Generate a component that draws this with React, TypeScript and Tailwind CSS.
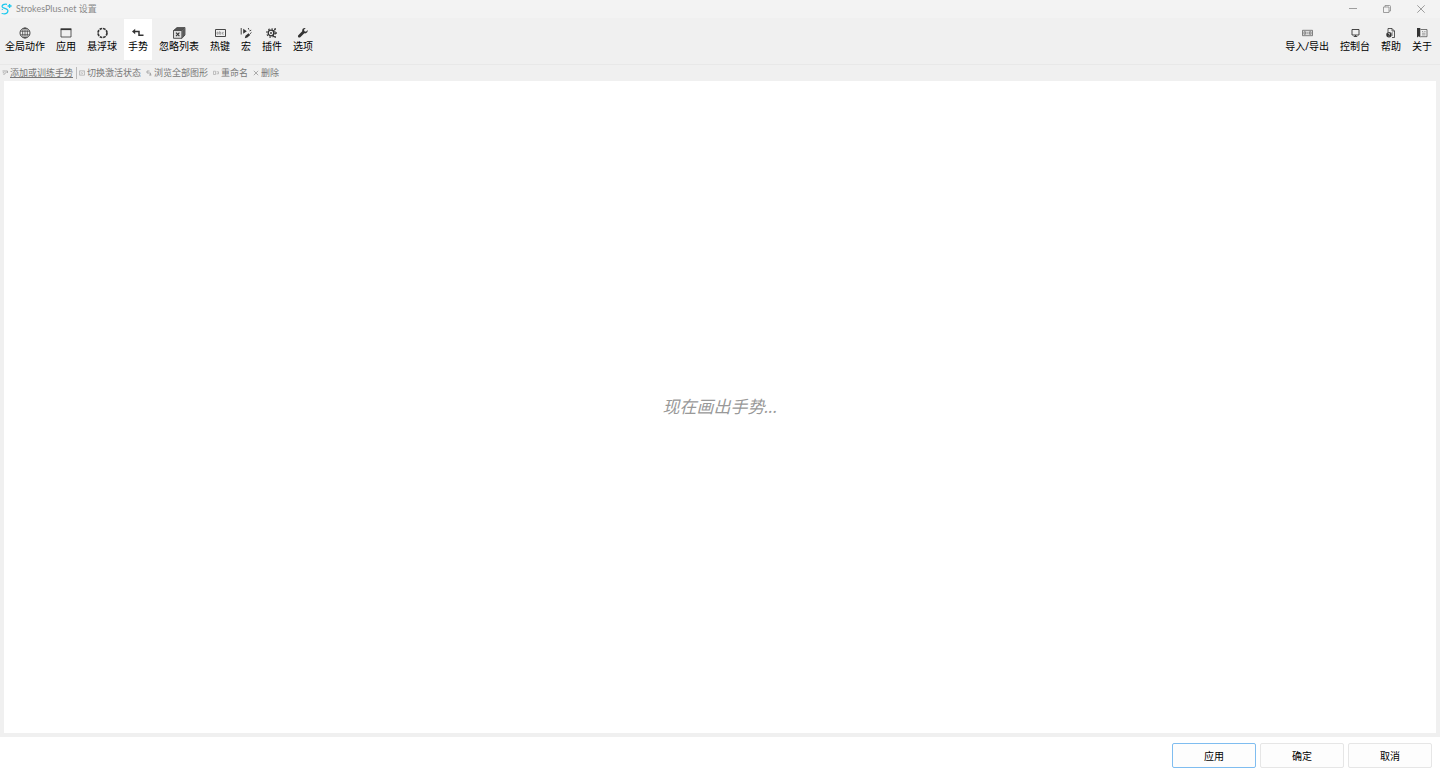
import type { ReactNode } from "react";

type Item = { label: string; icon: ReactNode; active?: boolean };

function Icon({ children }: { children: ReactNode }) {
  return (
    <svg viewBox="0 0 14 14" className="-mx-[2px] h-[14px] w-[14px] shrink-0" fill="none" stroke="#333" strokeWidth="0.9" aria-hidden="true">
      {children}
    </svg>
  );
}

function SmallIcon({ children }: { children: ReactNode }) {
  return (
    <svg viewBox="0 0 6 6" className="h-[6px] w-[6px] shrink-0" fill="none" stroke="#999" strokeWidth="0.8" aria-hidden="true">
      {children}
    </svg>
  );
}

const tabs: Item[] = [
  {
    label: "全局动作",
    icon: (
      <Icon>
        <circle cx="7" cy="7" r="5" />
        <ellipse cx="7" cy="7" rx="2.4" ry="5" strokeWidth="0.7" />
        <path d="M7 2v10M2.6 5.2h8.8M2.6 8.8h8.8" strokeWidth="0.7" />
      </Icon>
    ),
  },
  {
    label: "应用",
    icon: (
      <Icon>
        <path d="M2 3.500h10v7.500H2z" strokeWidth="0.8" />
        <path d="M1.600 3.200h10.800" strokeWidth="1.8" />
      </Icon>
    ),
  },
  {
    label: "悬浮球",
    icon: (
      <Icon>
        <circle cx="7.500" cy="7" r="4.500" strokeWidth="1.700" strokeDasharray="2.700 0.834" />
      </Icon>
    ),
  },
  {
    label: "手势",
    active: true,
    icon: (
      <Icon>
        <path d="M3 5.500h5v3.800h4.500" strokeWidth="1.500" />
        <path d="M1 5.500 4.200 2.800v5.400z" fill="#333" stroke="none" />
      </Icon>
    ),
  },
  {
    label: "忽略列表",
    icon: (
      <Icon>
        <path d="M1.500 4.500 5 1.500h8v7.500L9.900 12.300z" fill="#888" stroke="#444" strokeWidth="0.8" />
        <path d="M2.800 3.500h8.300V11M4 2.500h8v7.500" stroke="#333" strokeWidth="0.6" />
        <path d="M1.500 4.500h8.400v7.800H1.500z" fill="#ddd" stroke="#444" strokeWidth="0.9" />
        <path d="m4 6.700 3.400 3.400M7.400 6.700 4 10.100" strokeWidth="1.100" />
      </Icon>
    ),
  },
  {
    label: "热键",
    icon: (
      <Icon>
        <path d="M2.500 3.500h10v7h-10z" strokeWidth="0.9" />
        <path d="M4 6.200h1.200v2H4zM6.600 5.200v3h1.300V6.400H6.600M10.800 6.400H9.500v1.800h1.300" stroke="#888" strokeWidth="0.7" />
      </Icon>
    ),
  },
  {
    label: "宏",
    icon: (
      <Icon>
        <path d="M2.200 2v6.500" />
        <path d="m4.200 2.700 3.600 2.500-3.600 2.500z" fill="#333" stroke="none" />
        <path d="m5.800 12.300.7-2.600 3-2.500 1.700 1.700-2.900 2.700z" fill="#333" stroke="none" />
        <path d="m9.300 2 .5 1.600M12.200 4.200l-1.700.7M12.500 6.400 11 7.800" strokeWidth="0.9" />
      </Icon>
    ),
  },
  {
    label: "插件",
    icon: (
      <Icon>
        <circle cx="6" cy="7" r="2.800" strokeWidth="1.300" />
        <circle cx="6" cy="7" r="4.200" strokeWidth="1.200" strokeDasharray="1.500 1.800" />
        <circle cx="6" cy="7" r="0.900" fill="#333" stroke="none" />
        <path d="M8 7h3M8 5l2-2M8 9l2 2" strokeWidth="0.8" />
        <path d="M9.400 2.200h1.600v1.600H9.400zM10.300 6.200h1.600v1.600h-1.600zM9.400 10.200h1.600v1.600H9.400z" fill="#333" stroke="none" />
      </Icon>
    ),
  },
  {
    label: "选项",
    icon: (
      <Icon>
        <path
          d="M11.600 4.100 10 5.700 8.400 5.300 8 3.800l1.600-1.600C7.800 1.700 5.800 3 6.200 5.300L2.300 9.200c-1.200 1.400.6 3.200 2 2l4-3.900c2.300.5 3.800-1.400 3.300-3.200z"
          fill="#333"
          stroke="none"
        />
      </Icon>
    ),
  },
];

const links: Item[] = [
  {
    label: "导入/导出",
    icon: (
      <Icon>
        <path d="M2.500 4.300h10v5.400h-10z" fill="#ddd" stroke="#666" strokeWidth="0.8" />
        <path d="M4 5.800h1.600v2.400H4zM9.400 5.800H11v2.400H9.400zM6.600 7h1.800" stroke="#666" strokeWidth="0.7" />
      </Icon>
    ),
  },
  {
    label: "控制台",
    icon: (
      <Icon>
        <path d="M4 3.500h7v5.500H4z" />
        <path d="M7.500 9v1.500M5.700 10.500h3.600" />
      </Icon>
    ),
  },
  {
    label: "帮助",
    icon: (
      <Icon>
        <path d="M4 6V2.500h4L10.500 5v6.500H8" strokeWidth="0.8" />
        <path d="M8 2.500V5h2.500M7.500 7H9M8 9h1" strokeWidth="0.7" />
        <circle cx="5" cy="8.700" r="2.700" fill="#333" stroke="none" />
        <path d="M4.200 8c0-1.200 1.700-1 1.600 0 0 .6-.8.6-.8 1.300M5 9.900v.6" stroke="#eee" strokeWidth="0.700" />
      </Icon>
    ),
  },
  {
    label: "关于",
    icon: (
      <Icon>
        <path d="M2 2h3.300v9.500L3.800 10.300 2 11.500z" fill="#333" stroke="none" />
        <path d="M5.500 3.500h6.500v7.200H5.500" stroke="#555" strokeWidth="0.8" />
        <path d="M7 5.500h1.200M9.300 5.500h1.200M7 7.200h3.500M7 8.900h3.500" stroke="#777" strokeWidth="0.7" />
      </Icon>
    ),
  },
];

const actions: Item[] = [
  {
    label: "切换激活状态",
    icon: (
      <SmallIcon>
        <path d="M.5.8h5v4.400h-5zM1.500 2l2.500 2M3.500 2h1M1.500 4h1" stroke="#aaa" strokeWidth="0.7" />
      </SmallIcon>
    ),
  },
  {
    label: "浏览全部图形",
    icon: (
      <SmallIcon>
        <path d="M3.500 1H1v2h3.500v2.200M3 5h2.500" />
      </SmallIcon>
    ),
  },
  {
    label: "重命名",
    icon: (
      <SmallIcon>
        <path d="M.5 1.200h2v3.300h-2zM3.500 1.800h2v2h-2" stroke="#aaa" strokeWidth="0.7" />
      </SmallIcon>
    ),
  },
  {
    label: "删除",
    icon: (
      <SmallIcon>
        <path d="m.8.8 4.400 4.400M5.200.8.8 5.200" />
      </SmallIcon>
    ),
  },
];

function NavButton({ label, icon, active }: Item) {
  return (
    <button
      type="button"
      className={`flex h-[41px] flex-col items-center px-[4px] pt-[7px] text-[10px] leading-[12px] text-black ${
        active ? "bg-white" : ""
      }`}
    >
      {icon}
      <span>{label}</span>
    </button>
  );
}

function WindowButton({ label, children }: { label: string; children: ReactNode }) {
  return (
    <button type="button" aria-label={label} className="flex h-full w-[34px] items-center justify-center">
      <svg viewBox="0 0 10 10" className="h-[10px] w-[10px]" fill="none" stroke="#888" strokeWidth="0.8" aria-hidden="true">
        {children}
      </svg>
    </button>
  );
}

export default function App() {
  return (
    <div className="flex min-h-screen flex-col bg-[#f0f0f0] font-['Noto_Sans','Noto_Sans_CJK_SC',sans-serif] whitespace-nowrap">
      {/* Title bar */}
      <header className="flex h-[18px] items-center bg-[#f3f3f3]">
        <svg viewBox="0 0 12 12" className="ml-px h-[12px] w-[12px]" fill="none" stroke="#1cc8ee" strokeWidth="1.3" aria-hidden="true">
          <path d="M6 1.300C3 .6.600 2 1.300 3.900c.7 1.700 4.700 1.300 5.400 3.200.8 2.200-1.500 4.200-4.200 3.800" />
          <path d="M8.600 1v4M6.600 3h4" />
          <path d="M.6 10.600h2M.8 6.500h1" strokeWidth="1" />
        </svg>
        <h1 className="ml-[3px] font-['Lato','Noto_Sans_CJK_SC',sans-serif] text-[9px] leading-[12px] text-[#8a8a8a]">
          StrokesPlus.net 设置
        </h1>
        <div className="ml-auto flex h-full pr-[2px]">
          <WindowButton label="最小化">
            <path d="M1 4.500h8" />
          </WindowButton>
          <WindowButton label="还原">
            <path d="M1.500 3h5.500v5.500H1.500zM3 3V1.500h4.500q1 0 1 1V7H7" />
          </WindowButton>
          <WindowButton label="关闭">
            <path d="m1.300 1.300 7.400 7.400M8.700 1.300 1.300 8.700" />
          </WindowButton>
        </div>
      </header>

      {/* Main tabs */}
      <nav className="flex justify-between border-b border-[#e8e8e8] pt-px pr-[4px] pb-[4px] pl-px">
        <div className="flex gap-[3px]">
          {tabs.map((t) => (
            <NavButton key={t.label} {...t} />
          ))}
        </div>
        <div className="flex gap-[3px]">
          {links.map((t) => (
            <NavButton key={t.label} {...t} />
          ))}
        </div>
      </nav>

      {/* Gesture actions */}
      <div className="flex h-[16px] items-center gap-[5px] pl-[2px] text-[9px] leading-[12px] text-[#777]">
        <div className="flex items-center gap-[2px]">
          <button type="button" className="flex items-center gap-[2px]">
            <SmallIcon>
              <path d="M.5 1h3M1.500 5l3-3M3.500 1h2v2M.8 2.800h1.500" />
            </SmallIcon>
            <span className="underline">添加或训练手势</span>
          </button>
          <span className="ml-px h-[12px] w-px bg-[#bbb]" />
          <button type="button" className="flex items-center gap-[2px]">
            {actions[0].icon}
            <span>{actions[0].label}</span>
          </button>
        </div>
        {actions.slice(1).map((a) => (
          <button type="button" key={a.label} className="flex items-center gap-[2px]">
            {a.icon}
            <span>{a.label}</span>
          </button>
        ))}
      </div>

      <main className="mx-[4px] mb-[4px] flex flex-1 items-center justify-center bg-white">
        <p className="text-[17px] leading-[24px] text-[#999] italic">现在画出手势...</p>
      </main>

      <footer className="flex justify-end gap-[4px] bg-white px-[8px] py-[6px] text-[10px] leading-[12px] text-black">
        <button type="button" className="h-[25px] w-[84px] rounded-[2px] border border-[#7fbdf0] bg-[#fdfdfd]">
          应用
        </button>
        <button type="button" className="h-[25px] w-[84px] rounded-[2px] border border-[#e6e6e6] bg-[#fdfdfd]">
          确定
        </button>
        <button type="button" className="h-[25px] w-[84px] rounded-[2px] border border-[#e6e6e6] bg-[#fdfdfd]">
          取消
        </button>
      </footer>
    </div>
  );
}
